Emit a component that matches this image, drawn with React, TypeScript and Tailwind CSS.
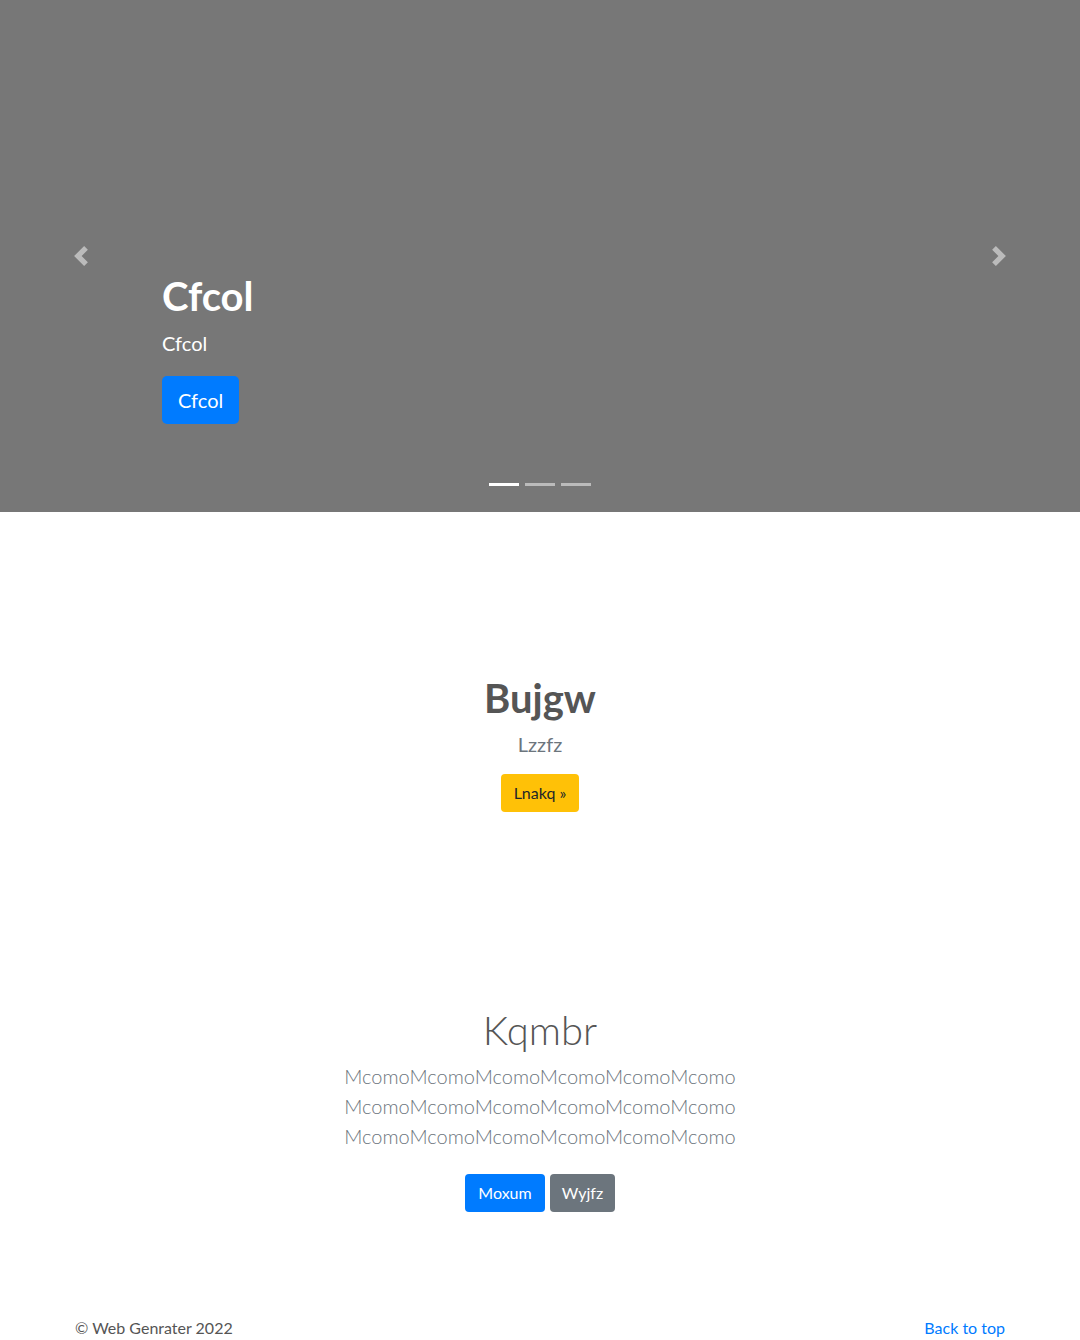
import { useState } from 'react';

const SLIDES = ['Cfcol', 'Cfcol', 'Cfcol'];
const FONT = { fontFamily: 'Lato, "Open Sans", sans-serif' };

function Chevron({ dir }: { dir: 'left' | 'right' }) {
  const d = dir === 'left'
    ? 'M5.25 0l-4 4 4 4 1.5-1.5L4.25 4l2.5-2.5L5.25 0z'
    : 'M2.75 0l-1.5 1.5L3.75 4l-2.5 2.5L2.75 8l4-4-4-4z';
  return (
    <svg width="20" height="20" viewBox="0 0 8 8" fill="#fff">
      <path d={d} />
    </svg>
  );
}

export default function App() {
  const [active, setActive] = useState(0);

  return (
    <div className="bg-white min-h-[1340px] flex flex-col" style={FONT}>
      {/* Carousel */}
      <div className="relative h-[512px] bg-[#777] overflow-hidden">
        <button onClick={() => setActive(a => (a + SLIDES.length - 1) % SLIDES.length)}
          className="absolute left-0 top-0 bottom-0 w-[15%] flex items-center justify-center opacity-50">
          <Chevron dir="left" />
        </button>
        <button onClick={() => setActive(a => (a + 1) % SLIDES.length)}
          className="absolute right-0 top-0 bottom-0 w-[15%] flex items-center justify-center opacity-50">
          <Chevron dir="right" />
        </button>

        <div className="absolute left-[15%] right-[15%] bottom-[88px] text-white">
          <h1 className="text-[40px] leading-[48px] font-bold mb-[8px]">{SLIDES[active]}</h1>
          <p className="text-[20px] leading-[30px] mb-[18px]">Cfcol</p>
          <button className="h-12 px-4 rounded-[5px] bg-[#007bff] text-white text-[20px] leading-[30px]">Cfcol</button>
        </div>

        <div className="absolute left-0 right-0 bottom-[26px] flex justify-center gap-[6px]">
          {SLIDES.map((_, i) => (
            <button key={i} onClick={() => setActive(i)}
              className={`w-[30px] h-[3px] bg-white ${i === active ? 'opacity-100' : 'opacity-50'}`} />
          ))}
        </div>
      </div>

      {/* Jumbotron */}
      <div className="flex flex-col items-center pt-[162px]">
        <h2 className="text-[40px] leading-[48px] font-bold text-[#555]">Bujgw</h2>
        <p className="mt-[7px] text-[20px] leading-[30px] text-[#6c757d]">Lzzfz</p>
        <button className="mt-[15px] h-[38px] px-[13px] rounded-[4px] bg-[#ffc107] text-[#212529] text-[16px]">Lnakq »</button>
      </div>

      {/* Feature */}
      <div className="flex flex-col items-center pt-[194px]">
        <h2 className="text-[40px] leading-[48px] font-light text-[#555]">Kqmbr</h2>
        <div className="mt-[7px] text-[20px] leading-[30px] font-light text-[#6c757d] text-center">
          <p>McomoMcomoMcomoMcomoMcomoMcomo</p>
          <p>McomoMcomoMcomoMcomoMcomoMcomo</p>
          <p>McomoMcomoMcomoMcomoMcomoMcomo</p>
        </div>
        <div className="mt-[23px] flex gap-[5px]">
          <button className="h-[38px] w-[80px] rounded-[4px] bg-[#007bff] text-white text-[16px]">Moxum</button>
          <button className="h-[38px] w-[65px] rounded-[4px] bg-[#6c757d] text-white text-[16px]">Wyjfz</button>
        </div>
      </div>

      {/* Footer */}
      <footer className="mt-auto w-[960px] mx-auto px-[15px] flex justify-between text-[16px] leading-[24px]">
        <p className="text-[#555]">© Web Genrater 2022</p>
        <a href="#" className="text-[#007bff]">Back to top</a>
      </footer>
    </div>
  );
}
